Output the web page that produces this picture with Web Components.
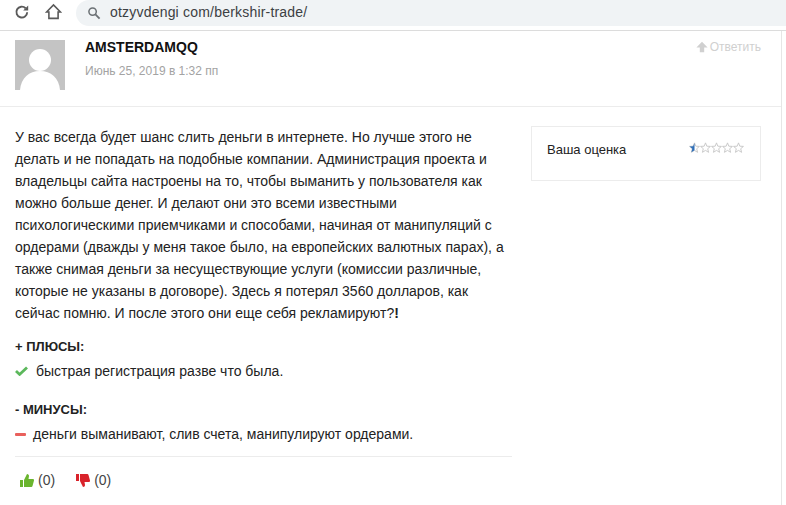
<!DOCTYPE html>
<html lang="ru">
<head>
<meta charset="utf-8">
<title>Отзыв</title>
<style>
  html, body { margin: 0; background: #fff; }
  body { width: 786px; height: 505px; overflow: hidden; font-family: "Liberation Sans", Arial, sans-serif; }
</style>
</head>
<body>
<browser-bar url="otzyvdengi com/berkshir-trade/"></browser-bar>
<review-card>
  <review-head slot="head" name="AMSTERDAMQQ" date="Июнь 25, 2019 в 1:32 пп"></review-head>
  <p>У вас всегда будет шанс слить деньги в интернете. Но лучше этого не<br>делать и не попадать на подобные компании. Администрация проекта и<br>владельцы сайта настроены на то, чтобы выманить у пользователя как<br>можно больше денег. И делают они это всеми известными<br>психологическими приемчиками и способами, начиная от манипуляций с<br>ордерами (дважды у меня такое было, на европейских валютных парах), а<br>также снимая деньги за несуществующие услуги (комиссии различные,<br>которые не указаны в договоре). Здесь я потерял 3560 долларов, как<br>сейчас помню. И после этого они еще себя рекламируют?<b>!</b></p>
  <pro-con kind="plus" title="ПЛЮСЫ:" sign="+">быстрая регистрация разве что была.</pro-con>
  <pro-con kind="minus" title="МИНУСЫ:" sign="-">деньги выманивают, слив счета, манипулируют ордерами.</pro-con>
  <vote-row></vote-row>
  <rating-box slot="side" label="Ваша оценка" value="1"></rating-box>
</review-card>

<script>
class BrowserBar extends HTMLElement {
  constructor() {
    super();
    this.attachShadow({ mode: 'open' });
    this.shadowRoot.innerHTML = `
      <style>
        :host { display: flex; align-items: flex-start; height: 31px; box-sizing: border-box; border-bottom: 1px solid #dcdcdc; padding-left: 14px; background: #fff; }
        svg { display: block; flex: none; }
        .reload { margin-top: 4px; }
        .home { margin: 3px 0 0 15px; }
        .omni { flex: 1; height: 26px; margin-left: 14px; padding-left: 11px; display: flex; align-items: center; background: #f0f3f5; border-radius: 13px 0 0 13px; }
        .url { margin-left: 9px; font-size: 14px; letter-spacing: .2px; color: #3c4043; padding-bottom: 2px; }
      </style>
      <svg class="reload" width="16" height="16" viewBox="0 0 16 16" fill="none"><path d="M13.2 8.2A5.4 5.4 0 1 1 11.6 4.2" stroke="#5a5a5a" stroke-width="1.9"/><path d="M14.2 1.6V6.6H9.2Z" fill="#5a5a5a"/></svg>
      <svg class="home" width="17" height="17" viewBox="0 0 17 17" fill="none"><path d="M1.6 9 8.5 2l6.9 7h-2.3v6.4H3.9V9Z" stroke="#5a5a5a" stroke-width="1.6"/></svg>
      <div class="omni">
        <svg width="14" height="14" viewBox="0 0 14 14" fill="none"><circle cx="5.6" cy="5.6" r="3.7" stroke="#6b7074" stroke-width="1.5"/><path d="M8.4 8.4 12.6 12.6" stroke="#6b7074" stroke-width="1.8"/></svg>
        <span class="url">${this.getAttribute('url')}</span>
      </div>`;
  }
}

class ReviewCard extends HTMLElement {
  constructor() {
    super();
    this.attachShadow({ mode: 'open' });
    this.shadowRoot.innerHTML = `
      <style>
        :host { display: block; width: 782px; height: 474px; box-sizing: border-box; border-right: 1px solid #e6e6e6; color: #222; font-size: 14px; }
        .body { display: flex; align-items: flex-start; padding: 19px 20px 0 15px; }
        .main { width: 497px; flex: none; }
        .side { margin-left: 19px; flex: 1; }
        ::slotted(p) { margin: 0; line-height: 22px; font-size: 14px; color: #222; white-space: nowrap; }
      </style>
      <slot name="head"></slot>
      <div class="body">
        <div class="main"><slot></slot></div>
        <div class="side"><slot name="side"></slot></div>
      </div>`;
  }
}

class ReviewHead extends HTMLElement {
  constructor() {
    super();
    this.attachShadow({ mode: 'open' });
    this.shadowRoot.innerHTML = `
      <style>
        :host { display: flex; height: 76px; box-sizing: border-box; border-bottom: 1px solid #ececec; padding: 9px 20px 0 15px; }
        svg.ava { display: block; width: 50px; height: 50px; flex: none; }
        .who { margin-left: 20px; flex: 1; margin-top: -1px; }
        .name { font-size: 14px; font-weight: bold; color: #111; line-height: 16px; }
        .date { font-size: 12px; color: #a3a3a3; line-height: 14px; margin-top: 9px; }
        .reply { display: flex; align-items: center; gap: 2px; font-size: 12px; color: #d0d0d0; height: 14px; }
        svg.up { display: block; }
      </style>
      <svg class="ava" viewBox="0 0 50 50"><rect width="50" height="50" fill="#c4c4c4"/><circle cx="25" cy="20" r="11" fill="#fff"/><path d="M5 50C6 38 14 31 25 31s19 7 20 19Z" fill="#fff"/></svg>
      <div class="who">
        <div class="name">${this.getAttribute('name')}</div>
        <div class="date">${this.getAttribute('date')}</div>
      </div>
      <div class="reply">
        <svg class="up" width="12" height="12" viewBox="0 0 12 12"><path d="M6 .8 11.6 6.4H8.2V11.2H3.800V6.400H.4Z" fill="#d0d0d0"/></svg>
        <span>Ответить</span>
      </div>`;
  }
}

class ProCon extends HTMLElement {
  constructor() {
    super();
    this.attachShadow({ mode: 'open' });
    const plus = this.getAttribute('kind') === 'plus';
    const icon = plus
      ? `<svg width="13" height="10" viewBox="0 0 13 10" style="margin-right:8px"><path d="M1 5 4.600 8.400 12 1.400" fill="none" stroke="#5cb85c" stroke-width="2.8"/></svg>`
      : `<span style="display:block;width:11px;height:3px;background:#e9605c;margin-right:7px;border-radius:1px"></span>`;
    this.shadowRoot.innerHTML = `
      <style>
        :host { display: block; font-size: 14px; line-height: 20px; color: #222; }
        :host([kind="plus"]) { margin-top: 13px; }
        :host([kind="minus"]) { margin-top: 19px; padding-bottom: 12px; border-bottom: 1px solid #ececec; }
        .title { font-weight: bold; font-size: 13px; }
        .item { display: flex; align-items: center; margin-top: 4px; font-size: 14px; }
      </style>
      <div class="title">${this.getAttribute('sign')} ${this.getAttribute('title')}</div>
      <div class="item">${icon}<span><slot></slot></span></div>`;
  }
}

class VoteRow extends HTMLElement {
  constructor() {
    super();
    this.attachShadow({ mode: 'open' });
    this.shadowRoot.innerHTML = `
      <style>
        :host { display: flex; align-items: center; height: 20px; margin-top: 13px; padding-left: 5px; font-size: 14px; color: #444; }
        svg { display: block; margin-right: 4px; }
        span { margin-right: 21px; }
      </style>
      <svg width="14" height="13" viewBox="0 0 14 13"><path d="M0 6h3v7H0ZM4 6l3-6c1.400 0 2 1 2 2L8.500 5H13c1 0 1.200 1 1 1.600L12.500 12c-.2.600-.6 1-1.200 1H4Z" fill="#6ab52e"/></svg><span>(0)</span>
      <svg width="14" height="13" viewBox="0 0 14 13"><path d="M0 0h3v7H0ZM4 7l3 6c1.400 0 2-1 2-2L8.500 8H13c1 0 1.200-1 1-1.600L12.500 1c-.2-.6-.6-1-1.200-1H4Z" fill="#d9232b"/></svg><span>(0)</span>`;
  }
}

class RatingBox extends HTMLElement {
  constructor() {
    super();
    this.attachShadow({ mode: 'open' });
    const star = 'M5 .8 6.200 3.800 9.500 4 7 6.100 7.800 9.400 5 7.600 2.200 9.400 3 6.100.5 4 3.800 3.800Z';
    let stars = '';
    for (let i = 0; i < 5; i++) {
      stars += `<svg width="11" height="11" viewBox="0 0 10 10"><path d="${star}" fill="none" stroke="#c4c4c4" stroke-width=".8"/>${i === 0 ? `<path d="M5 .8V7.600L2.200 9.400 3 6.100.5 4 3.800 3.800Z" fill="#2f6fb8"/>` : ''}</svg>`;
    }
    this.shadowRoot.innerHTML = `
      <style>
        :host { display: flex; width: 230px; height: 55px; box-sizing: border-box; border: 1px solid #ececec; padding: 15px 16px 0 15px; justify-content: space-between; font-size: 13px; color: #222; }
        .label { line-height: 16px; }
        .stars { display: flex; height: 11px; }
        svg { display: block; }
      </style>
      <span class="label">${this.getAttribute('label')}</span>
      <div class="stars">${stars}</div>`;
  }
}

customElements.define('browser-bar', BrowserBar);
customElements.define('review-card', ReviewCard);
customElements.define('review-head', ReviewHead);
customElements.define('pro-con', ProCon);
customElements.define('vote-row', VoteRow);
customElements.define('rating-box', RatingBox);
</script>
</body>
</html>
